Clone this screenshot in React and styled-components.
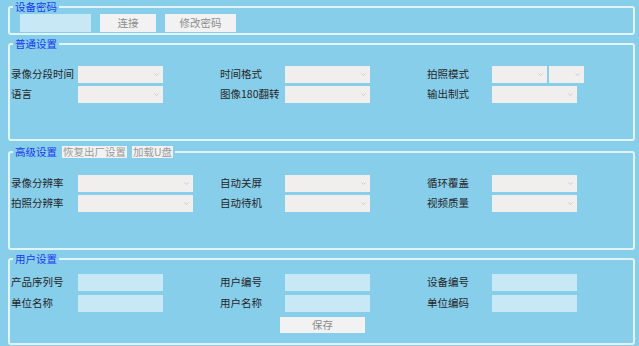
import React from 'react';
import styled, { createGlobalStyle } from 'styled-components';

const Global = createGlobalStyle`
  html, body { margin: 0; padding: 0; background: #87ceeb; }
  body {
    font-family: "Noto Sans CJK SC", "Microsoft YaHei", sans-serif;
    font-size: 10.5px;
    color: #262626;
  }
`;

const Page = styled.div`
  width: 639px;
  height: 346px;
  box-sizing: border-box;
  padding: 1px 4px 0 8px;
  display: flex;
  flex-direction: column;
  background: #87ceeb;
  overflow: hidden;
`;

const Group = styled.fieldset`
  margin: ${(p) => p.$mt}px 0 0 0;
  padding: ${(p) => p.$pt}px 0 0 0;
  border: 2px solid #e2f3fa;
  border-radius: 3px;
  height: ${(p) => p.$h}px;
  box-sizing: border-box;
  min-inline-size: 0;
  flex: none;
`;

const Legend = styled.legend`
  margin-left: 3px;
  padding: 0 2px;
  height: 12px;
  line-height: 12px;
  color: #1838f0;
  display: flex;
  align-items: center;
  gap: 5px;
`;

const LegendButton = styled.span`
  display: inline-block;
  height: 12px;
  line-height: 12px;
  padding: 0 1px;
  background: #f2f2f2;
  color: #9a9a9a;
`;

const ConnectRow = styled.div`
  display: flex;
  align-items: center;
  padding-left: 10px;
  gap: 9px;
`;

const TextBox = styled.div`
  width: ${(p) => p.$w}px;
  height: ${(p) => p.$h || 17}px;
  background: #c9e8f6;
  box-sizing: border-box;
`;

const Button = styled.button`
  width: ${(p) => p.$w}px;
  height: ${(p) => p.$h || 18}px;
  border: none;
  margin: 0;
  padding: 0;
  background: #f2f2f2;
  color: #8c8c8c;
  font-family: inherit;
  font-size: 10.5px;
  line-height: ${(p) => p.$h || 18}px;
  text-align: center;
`;

const Grid = styled.div`
  display: grid;
  grid-template-columns: 68px 141px 66px 141px 66px 1fr;
  row-gap: ${(p) => p.$gap || 3}px;
  align-items: center;
`;

const Label = styled.div`
  padding-left: 1px;
  height: 17px;
  line-height: 16px;
  white-space: nowrap;
`;

const Cell = styled.div`
  display: flex;
  gap: 2px;
`;

const SelectBox = styled.div`
  width: ${(p) => p.$w}px;
  height: 17px;
  background: #f1eeee;
  display: flex;
  align-items: center;
  justify-content: flex-end;
  padding-right: 4px;
  box-sizing: border-box;
`;

const SaveRow = styled.div`
  display: flex;
  padding-left: 270px;
  margin-top: 5px;
`;

const Chevron = () => (
  <svg width="5" height="3" viewBox="0 0 5 3" aria-hidden="true">
    <path d="M0.5 0.5 L2.5 2.5 L4.5 0.5" fill="none" stroke="#c4c4c4" strokeWidth="0.8" />
  </svg>
);

const Select = ({ w }) => (
  <SelectBox $w={w}>
    <Chevron />
  </SelectBox>
);

export default function App() {
  return (
    <>
      <Global />
      <Page>
        <Group $mt={0} $pt={1} $h={34}>
          <Legend>设备密码</Legend>
          <ConnectRow>
            <TextBox $w={71} $h={18} />
            <Button $w={56}>连接</Button>
            <Button $w={71}>修改密码</Button>
          </ConnectRow>
        </Group>

        <Group $mt={3} $pt={16} $h={103}>
          <Legend>普通设置</Legend>
          <Grid>
            <Label>录像分段时间</Label>
            <Cell><Select w={85} /></Cell>
            <Label>时间格式</Label>
            <Cell><Select w={85} /></Cell>
            <Label>拍照模式</Label>
            <Cell><Select w={55} /><Select w={35} /></Cell>
            <Label>语言</Label>
            <Cell><Select w={85} /></Cell>
            <Label>图像180翻转</Label>
            <Cell><Select w={85} /></Cell>
            <Label>输出制式</Label>
            <Cell><Select w={85} /></Cell>
          </Grid>
        </Group>

        <Group $mt={5} $pt={17} $h={104}>
          <Legend>
            高级设置
            <LegendButton>恢复出厂设置</LegendButton>
            <LegendButton>加载U盘</LegendButton>
          </Legend>
          <Grid>
            <Label>录像分辨率</Label>
            <Cell><Select w={115} /></Cell>
            <Label>自动关屏</Label>
            <Cell><Select w={85} /></Cell>
            <Label>循环覆盖</Label>
            <Cell><Select w={85} /></Cell>
            <Label>拍照分辨率</Label>
            <Cell><Select w={115} /></Cell>
            <Label>自动待机</Label>
            <Cell><Select w={85} /></Cell>
            <Label>视频质量</Label>
            <Cell><Select w={85} /></Cell>
          </Grid>
        </Group>

        <Group $mt={3} $pt={9} $h={92}>
          <Legend>用户设置</Legend>
          <Grid $gap={4}>
            <Label>产品序列号</Label>
            <Cell><TextBox $w={85} /></Cell>
            <Label>用户编号</Label>
            <Cell><TextBox $w={85} /></Cell>
            <Label>设备编号</Label>
            <Cell><TextBox $w={85} /></Cell>
            <Label>单位名称</Label>
            <Cell><TextBox $w={85} /></Cell>
            <Label>用户名称</Label>
            <Cell><TextBox $w={85} /></Cell>
            <Label>单位编码</Label>
            <Cell><TextBox $w={85} /></Cell>
          </Grid>
          <SaveRow>
            <Button $w={85} $h={16}>保存</Button>
          </SaveRow>
        </Group>
      </Page>
    </>
  );
}
